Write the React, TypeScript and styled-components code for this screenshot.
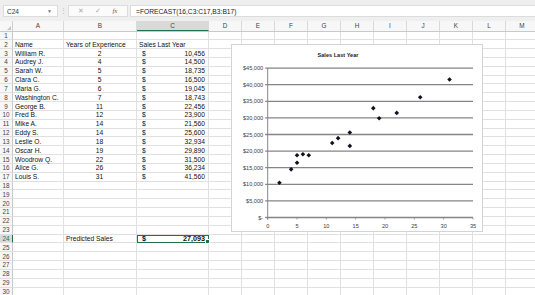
import React from 'react';
import styled, { createGlobalStyle } from 'styled-components';

const GlobalStyle = createGlobalStyle`
  html, body { margin: 0; padding: 0; background: #fff; }
  body {
    font-family: "Liberation Sans", Arial, sans-serif;
    overflow: hidden;
    width: 535px;
    height: 295px;
  }
`;

const ROW_H = 8.84;
const GREEN = '#217346';

const COLS = [
  { key: 'A', w: 51 },
  { key: 'B', w: 73 },
  { key: 'C', w: 72 },
  { key: 'D', w: 33 },
  { key: 'E', w: 33 },
  { key: 'F', w: 33 },
  { key: 'G', w: 33 },
  { key: 'H', w: 33 },
  { key: 'I', w: 33 },
  { key: 'J', w: 33 },
  { key: 'K', w: 33 },
  { key: 'L', w: 33 },
  { key: 'M', w: 33 },
];

const people: [string, number, string][] = [
  ['William R.', 2, '10,456'],
  ['Audrey J.', 4, '14,500'],
  ['Sarah W.', 5, '18,735'],
  ['Clara C.', 5, '16,500'],
  ['Maria G.', 6, '19,045'],
  ['Washington C.', 7, '18,743'],
  ['George B.', 11, '22,456'],
  ['Fred B.', 12, '23,900'],
  ['Mike A.', 14, '21,560'],
  ['Eddy S.', 14, '25,600'],
  ['Leslie O.', 18, '32,934'],
  ['Oscar H.', 19, '29,890'],
  ['Woodrow Q.', 22, '31,500'],
  ['Alice G.', 26, '36,234'],
  ['Louis S.', 31, '41,560'],
];

/* ---------- formula bar ---------- */

const Toolbar = styled.div`
  display: flex;
  align-items: stretch;
  height: 21px;
  box-sizing: border-box;
  padding: 5px 0 4px 3px;
  background: #efefef;
`;

const NameBox = styled.div`
  width: 55px;
  box-sizing: border-box;
  background: #fff;
  border: 1px solid #dcdcdc;
  display: flex;
  align-items: center;
  justify-content: space-between;
  padding: 0 5px 0 3px;
  font-size: 6.5px;
  color: #333;
`;

const Caret = styled.span`
  font-size: 5px;
  color: #777;
`;

const Dots = styled.div`
  width: 10px;
  display: flex;
  align-items: center;
  justify-content: center;
  color: #b5b5b5;
  font-size: 7px;
`;

const FxBox = styled.div`
  width: 60px;
  box-sizing: border-box;
  background: #fbfbfb;
  border: 1px solid #dcdcdc;
  display: flex;
  align-items: center;
  justify-content: space-around;
  padding: 0 4px;
  color: #a9a9a9;
  font-size: 7px;
`;

const Fx = styled.span`
  font-family: "Liberation Serif", serif;
  font-style: italic;
  color: #666;
  font-size: 7px;
`;

const FormulaBox = styled.div`
  flex: 1;
  margin-left: 2px;
  background: #fff;
  border: 1px solid #dcdcdc;
  border-right: none;
  display: flex;
  align-items: center;
  padding-left: 5px;
  font-size: 6.7px;
  color: #222;
`;

/* ---------- sheet ---------- */

const Sheet = styled.div`
  position: relative;
`;

const HeaderRow = styled.div`
  display: flex;
  height: 10.5px;
  background: #f7f7f7;
  border-bottom: 1px solid #c9c9c9;
  box-sizing: border-box;
`;

const Corner = styled.div`
  width: 13px;
  flex: none;
  position: relative;
  border-right: 1px solid #d0d0d0;
  box-sizing: border-box;
  &::after {
    content: '';
    position: absolute;
    right: 1px;
    bottom: 1px;
    border-left: 4px solid transparent;
    border-bottom: 4px solid #c4c4c4;
  }
`;

const ColHead = styled.div<{ $w: number; $sel?: boolean }>`
  width: ${(p) => p.$w}px;
  flex: none;
  box-sizing: border-box;
  border-right: 1px solid #dadada;
  display: flex;
  align-items: center;
  justify-content: center;
  font-size: 6.4px;
  color: #444;
  background: ${(p) => (p.$sel ? '#d9d9d9' : 'transparent')};
  border-bottom: ${(p) => (p.$sel ? `1.5px solid ${GREEN}` : 'none')};
`;

const Row = styled.div`
  display: flex;
  height: ${ROW_H}px;
`;

const RowHead = styled.div<{ $sel?: boolean }>`
  width: 13px;
  flex: none;
  box-sizing: border-box;
  background: ${(p) => (p.$sel ? '#d9d9d9' : '#f7f7f7')};
  border-right: ${(p) => (p.$sel ? `1.5px solid ${GREEN}` : '1px solid #c9c9c9')};
  border-bottom: 1px solid #e0e0e0;
  display: flex;
  align-items: center;
  justify-content: center;
  font-size: 6.3px;
  color: ${(p) => (p.$sel ? GREEN : '#444')};
`;

const Cell = styled.div<{ $w: number; $align?: string; $sel?: boolean }>`
  position: relative;
  width: ${(p) => p.$w}px;
  flex: none;
  box-sizing: border-box;
  border-right: 1px solid #e0e0e0;
  border-bottom: 1px solid #e0e0e0;
  display: flex;
  align-items: center;
  justify-content: ${(p) => p.$align || 'flex-start'};
  padding: 0 3px 0 2px;
  font-size: 6.7px;
  color: #111;
  white-space: nowrap;
  ${(p) =>
    p.$sel &&
    `
    outline: 1.6px solid ${GREEN};
    outline-offset: -1px;
    z-index: 1;
    font-weight: bold;
    font-size: 7.2px;
    padding: 0 2px 0 5px;
    &::after {
      content: '';
      position: absolute;
      right: -2px;
      bottom: -2px;
      width: 3px;
      height: 3px;
      background: ${GREEN};
      border: 0.5px solid #fff;
    }
  `}
`;

const MoneyCell = styled(Cell)`
  justify-content: space-between;
  padding: 0 3px 0 5px;
`;

/* ---------- chart ---------- */

const ChartBox = styled.div`
  position: absolute;
  left: 231px;
  top: 23px;
  width: 252px;
  height: 188px;
  box-sizing: border-box;
  background: #fff;
  border: 1px solid #d4d4d4;
  z-index: 2;
`;

const X0 = 35.7;
const XS = 205.3 / 35;
const Y0 = 172.5;
const YS = 16.6 / 5000;
const FONT = '"Liberation Sans", Arial, sans-serif';

function ScatterChart() {
  const ys = [0, 5000, 10000, 15000, 20000, 25000, 30000, 35000, 40000, 45000];
  const xs = [0, 5, 10, 15, 20, 25, 30, 35];
  const label = (v: number) => (v === 0 ? '$-' : '$' + v.toLocaleString('en-US'));
  return (
    <ChartBox>
      <svg width="250" height="186" viewBox="0 0 250 186" style={{ display: 'block' }}>
        <text x="106" y="12" fontSize="5.6" fontWeight="bold" textAnchor="middle" fill="#222" fontFamily={FONT}>
          Sales Last Year
        </text>
        {ys.map((v) => {
          const y = Y0 - v * YS;
          return (
            <g key={v}>
              <line x1={X0 - 2.5} x2={241} y1={y} y2={y} stroke="#858585" strokeWidth="1.3" />
              <text x={X0 - 4.5} y={y + 2} fontSize="5.6" textAnchor="end" fill="#404040" fontFamily={FONT}>
                {label(v)}
              </text>
            </g>
          );
        })}
        <line x1={X0} x2={X0} y1={Y0 - 45000 * YS} y2={Y0 + 2} stroke="#858585" strokeWidth="1" />
        {xs.map((v) => {
          const x = X0 + v * XS;
          return (
            <g key={v}>
              <line x1={x} x2={x} y1={Y0} y2={Y0 + 2} stroke="#858585" strokeWidth="0.8" />
              <text x={x} y={Y0 + 10} fontSize="5.6" textAnchor="middle" fill="#404040" fontFamily={FONT}>
                {v}
              </text>
            </g>
          );
        })}
        {people.map(([n, yrs, s]) => {
          const x = X0 + yrs * XS;
          const y = Y0 - parseInt(s.replace(',', ''), 10) * YS;
          const r = 2.3;
          return (
            <polygon key={n} points={`${x},${y - r} ${x + r},${y} ${x},${y + r} ${x - r},${y}`} fill="#101020" />
          );
        })}
      </svg>
    </ChartBox>
  );
}

function renderRow(r: number) {
  const sel = r === 24;
  const cells: React.ReactNode[] = [];
  COLS.forEach((c) => {
    const k = c.key + r;
    if (r === 2 && c.key === 'A') cells.push(<Cell key={k} $w={c.w}>Name</Cell>);
    else if (r === 2 && c.key === 'B') cells.push(<Cell key={k} $w={c.w}>Years of Experience</Cell>);
    else if (r === 2 && c.key === 'C') cells.push(<Cell key={k} $w={c.w}>Sales Last Year</Cell>);
    else if (r >= 3 && r <= 17 && c.key < 'D') {
      const p = people[r - 3];
      if (c.key === 'A') cells.push(<Cell key={k} $w={c.w}>{p[0]}</Cell>);
      if (c.key === 'B') cells.push(<Cell key={k} $w={c.w} $align="center">{p[1]}</Cell>);
      if (c.key === 'C')
        cells.push(
          <MoneyCell key={k} $w={c.w}>
            <span>$</span>
            <span>{p[2]}</span>
          </MoneyCell>
        );
    } else if (sel && c.key === 'B') cells.push(<Cell key={k} $w={c.w}>Predicted Sales</Cell>);
    else if (sel && c.key === 'C')
      cells.push(
        <MoneyCell key={k} $w={c.w} $sel>
          <span>$</span>
          <span>27,093</span>
        </MoneyCell>
      );
    else cells.push(<Cell key={k} $w={c.w} />);
  });
  return (
    <Row key={r}>
      <RowHead $sel={sel}>{r}</RowHead>
      {cells}
    </Row>
  );
}

export default function App() {
  const rows = Array.from({ length: 30 }, (_, i) => i + 1);
  return (
    <>
      <GlobalStyle />
      <Toolbar>
        <NameBox>
          <span>C24</span>
          <Caret>▼</Caret>
        </NameBox>
        <Dots>⋮</Dots>
        <FxBox>
          <span>✕</span>
          <span>✓</span>
          <Fx>fx</Fx>
        </FxBox>
        <FormulaBox>=FORECAST(16,C3:C17,B3:B17)</FormulaBox>
      </Toolbar>
      <Sheet>
        <HeaderRow>
          <Corner />
          {COLS.map((c) => (
            <ColHead key={c.key} $w={c.w} $sel={c.key === 'C'}>
              {c.key}
            </ColHead>
          ))}
        </HeaderRow>
        {rows.map(renderRow)}
        <ScatterChart />
      </Sheet>
    </>
  );
}
